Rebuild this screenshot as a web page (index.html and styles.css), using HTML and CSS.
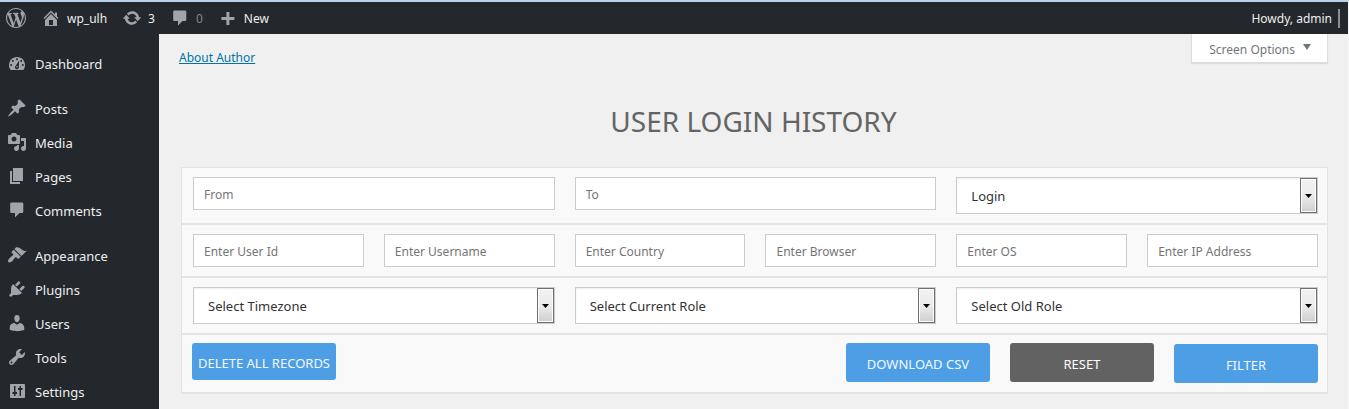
FILE: index.html
```html
<!DOCTYPE html>
<html lang="en">
<head>
<meta charset="utf-8">
<title>User Login History</title>
<link rel="stylesheet" href="styles.css">
</head>
<body>
<header class="adminbar">
  <a class="bar-item" href="#" aria-label="About WordPress"><svg class="icon" viewBox="0 0 20 20"><path d="M20 10c0-5.51-4.49-10-10-10C4.48 0 0 4.49 0 10c0 5.52 4.48 10 10 10 5.51 0 10-4.48 10-10zM7.78 15.37L4.37 6.22c.55-.02 1.17-.08 1.17-.08.5-.06.44-1.13-.06-1.11 0 0-1.45.11-2.37.11-.18 0-.37 0-.58-.01C4.12 2.69 6.87 1.11 10 1.11c2.33 0 4.45.87 6.05 2.34-.68-.11-1.65.39-1.65 1.58 0 .74.45 1.36.9 2.1.35.61.55 1.36.55 2.46 0 1.49-1.4 5-1.4 5l-3.03-8.37c.54-.02.82-.17.82-.17.5-.05.44-1.25-.06-1.22 0 0-1.44.12-2.38.12-.87 0-2.33-.12-2.33-.12-.5-.03-.56 1.2-.06 1.22l.92.08 1.26 3.41zM17.41 10c.24-.64.74-1.87.43-4.25.7 1.29 1.05 2.71 1.05 4.25 0 3.29-1.73 6.24-4.4 7.78.97-2.59 1.94-5.2 2.92-7.78zM6.1 18.09C3.12 16.65 1.11 13.53 1.11 10c0-1.3.23-2.48.72-3.59C3.25 10.3 4.67 14.2 6.1 18.09zm4.03-6.63l2.58 6.98c-.86.29-1.76.45-2.71.45-.79 0-1.57-.11-2.29-.33.81-2.38 1.62-4.74 2.42-7.1z"/></svg></a>
  <a class="bar-item" href="#"><svg class="icon" viewBox="0 0 20 20"><path fill-rule="evenodd" d="M16 8.5l1.53 1.53-1.06 1.06L10 4.6l-6.47 6.49-1.06-1.06L10 2.5l4 4v-2h2v4zm-6-2.46l6 5.99V18H4v-5.97zM12 17v-5H8v5h4z"/></svg>wp_ulh</a>
  <a class="bar-item" href="#"><svg class="icon" viewBox="0 0 20 20"><path d="M10.2 3.28c3.53 0 6.43 2.61 6.92 6h2.08l-3.5 4-3.5-4h2.32c-.45-1.97-2.21-3.45-4.32-3.45-1.45 0-2.73.71-3.54 1.78L4.95 5.66C6.23 4.2 8.11 3.28 10.2 3.28zm-.4 13.44c-3.52 0-6.43-2.61-6.92-6H.8l3.5-4 3.5 4H5.48c.45 1.97 2.21 3.45 4.32 3.45 1.45 0 2.73-.71 3.54-1.78l1.71 1.95c-1.28 1.46-3.15 2.38-5.25 2.38z"/></svg>3</a>
  <a class="bar-item bar-item-muted" href="#"><svg class="icon" viewBox="0 0 20 20"><path d="M4.500 2.500h10.500q1.300 0 1.300 1.300v8q0 1.200-1.300 1.200h-2.500L8 17.500V13H4.500q-1.300 0-1.300-1.200v-8q0-1.300 1.300-1.300z"/></svg>0</a>
  <a class="bar-item" href="#"><svg class="icon" viewBox="0 0 20 20"><path d="M8.400 4h3v5h5v3h-5v5h-3v-5h-5V9h5z"/></svg>New</a>
  <a class="bar-item bar-account" href="#">Howdy, admin<span class="avatar"></span></a>
</header>
<div class="layout">
  <nav class="sidebar" aria-label="Main menu">
    <div class="menu-group">
      <a class="menu-item" href="#"><svg class="icon" viewBox="0 0 20 20"><path d="M3.760 17h12.480c1.110-1.380 1.760-3.110 1.760-5 0-4.420-3.580-8-8-8s-8 3.580-8 8c0 1.890.65 3.620 1.760 5z"/><g class="icon-cut"><circle cx="10" cy="6.200" r="1"/><circle cx="5.800" cy="8" r="1"/><circle cx="14.200" cy="8" r="1"/><circle cx="4.200" cy="12" r="1"/><circle cx="15.800" cy="12" r="1"/><path d="M12.200 7.500l-.4 6a2 2 0 1 1-2.900-1z"/></g><circle cx="10" cy="13.800" r=".8"/></svg>Dashboard</a>
    </div>
    <div class="menu-group">
      <a class="menu-item" href="#"><svg class="icon" viewBox="0 0 20 20"><path d="M10.440 3.020l1.820-1.820 6.360 6.350-1.830 1.820c-1.050-.68-2.480-.57-3.410.36l-.75.75c-.92.93-1.040 2.350-.35 3.410l-1.830 1.820-2.410-2.410-2.800 2.790c-.42.42-3.380 2.710-3.800 2.290s1.860-3.390 2.280-3.810l2.790-2.790L4.100 9.360l1.830-1.820c1.050.69 2.480.57 3.400-.36l.75-.75c.93-.92 1.050-2.350.36-3.410z"/></svg>Posts</a>
      <a class="menu-item" href="#"><svg class="icon" viewBox="0 0 20 20"><path fill-rule="evenodd" d="M13 11V4c0-.55-.45-1-1-1h-1.670L9 1H5L3.670 3H2c-.55 0-1 .45-1 1v7c0 .55.45 1 1 1h10c.55 0 1-.45 1-1zM7 4.500c1.380 0 2.500 1.120 2.500 2.500S8.380 9.500 7 9.500 4.500 8.380 4.500 7 5.620 4.500 7 4.500zM14 6h5v10.500c0 1.380-1.120 2.500-2.500 2.500S14 17.880 14 16.500s1.120-2.500 2.500-2.500c.17 0 .34.02.5.05V9h-3V6zm-4 8.050V13h2v3.500c0 1.380-1.120 2.500-2.500 2.500S7 17.880 7 16.500 8.120 14 9.500 14c.17 0 .34.02.5.05z"/></svg>Media</a>
      <a class="menu-item" href="#"><svg class="icon" viewBox="0 0 20 20"><path d="M6 15V2h10v13H6zm-1 1h8v2H3V5h2v11z"/></svg>Pages</a>
      <a class="menu-item" href="#"><svg class="icon" viewBox="0 0 20 20"><path d="M4.500 2.500h10.500q1.300 0 1.300 1.300v8q0 1.200-1.300 1.200h-2.500L8 17.500V13H4.500q-1.300 0-1.300-1.200v-8q0-1.300 1.300-1.300z"/></svg>Comments</a>
    </div>
    <div class="menu-group">
      <a class="menu-item" href="#"><svg class="icon" viewBox="0 0 20 20"><path d="M14.480 11.060L7.410 3.990l1.500-1.500c.5-.56 2.300-.47 3.510.32 1.210.8 1.430 1.280 2.910 2.100 1.180.64 2.450 1.260 4.450.85zm-.71.71L6.700 4.700 4.930 6.470c-.39.39-.39 1.020 0 1.410l1.060 1.060c.39.39.39 1.030 0 1.420-.6.6-1.430 1.110-2.210 1.690-.35.26-.7.53-1.010.84C1.430 14.230.4 16.080 1.400 17.070c.99 1 2.840-.03 4.180-1.360.31-.31.58-.66.85-1.020.57-.78 1.080-1.610 1.690-2.210.39-.39 1.020-.39 1.410 0l1.060 1.060c.39.39 1.020.39 1.410 0z"/></svg>Appearance</a>
      <a class="menu-item" href="#"><svg class="icon" viewBox="0 0 20 20"><path d="M13.110 4.360L9.870 7.600 8 5.730l3.240-3.240c.35-.34 1.050-.2 1.560.32.52.51.66 1.210.31 1.550zm-8 1.770l.91-1.120 9.010 9.010-1.190.84c-.71.71-2.630 1.160-3.820 1.160H6.140L4.900 17.260c-.59.59-1.540.59-2.120 0-.59-.58-.59-1.530 0-2.120l1.240-1.240v-3.880c0-1.130.4-3.190 1.090-3.890zm7.260 3.970l3.240-3.240c.34-.35 1.040-.21 1.550.31.52.51.66 1.210.31 1.550l-3.240 3.250z"/></svg>Plugins</a>
      <a class="menu-item" href="#"><svg class="icon" viewBox="0 0 20 20"><path d="M10 9.250c-2.270 0-2.730-3.440-2.730-3.440C7 4.020 7.820 2 9.970 2c2.160 0 2.980 2.020 2.710 3.810 0 0-.41 3.440-2.680 3.440zm0 2.570L12.720 10c2.390 0 4.520 2.330 4.520 4.530v2.490s-3.650 1.130-7.240 1.130c-3.650 0-7.240-1.130-7.240-1.130v-2.490c0-2.250 1.940-4.480 4.470-4.480z"/></svg>Users</a>
      <a class="menu-item" href="#"><svg class="icon" viewBox="0 0 20 20"><path fill-rule="evenodd" d="M16.680 9.770c-1.340 1.340-3.300 1.670-4.950.99l-5.410 6.520c-.99.99-2.590.99-3.580 0s-.99-2.590 0-3.570l6.520-5.420c-.68-1.650-.35-3.610.99-4.950 1.280-1.280 3.120-1.620 4.720-1.060l-2.890 2.890 2.820 2.820 2.860-2.870c.53 1.580.18 3.390-1.080 4.650zM3.810 16.210c.4.39 1.040.39 1.430 0 .4-.4.4-1.040 0-1.430-.39-.4-1.030-.4-1.430 0-.39.39-.39 1.030 0 1.430z"/></svg>Tools</a>
      <a class="menu-item" href="#"><svg class="icon" viewBox="0 0 20 20"><path fill-rule="evenodd" d="M18 16V4c0-.6-.4-1-1-1H4c-.6 0-1 .4-1 1v12c0 .6.4 1 1 1h13c.6 0 1-.4 1-1zM8.500 11h1.500v2H8.500v2H7v-2H5.500v-2H7V5h1.500zM14 9v6h-1.500V9H11V7h1.500V5H14v2h1.500v2z"/></svg>Settings</a>
    </div>
  </nav>
  <main class="content">
    <div class="topline">
      <a class="about-link" href="#">About Author</a>
      <button class="screen-options" type="button">Screen Options<svg class="caret" viewBox="0 0 8 6"><path d="M0 0h8L4 6z"/></svg></button>
    </div>
    <h1 class="page-title">USER LOGIN HISTORY</h1>
    <form class="filters">
      <div class="filter-row cols-3">
        <input class="field" type="text" placeholder="From" aria-label="From">
        <input class="field" type="text" placeholder="To" aria-label="To">
        <div class="select-box"><select class="select" aria-label="Action type"><option>Login</option></select><span class="select-arrow"><svg class="arrow" viewBox="0 0 7 4"><path d="M0 0h7L3.500 4z"/></svg></span></div>
      </div>
      <div class="filter-row cols-6">
        <input class="field" type="text" placeholder="Enter User Id" aria-label="User Id">
        <input class="field" type="text" placeholder="Enter Username" aria-label="Username">
        <input class="field" type="text" placeholder="Enter Country" aria-label="Country">
        <input class="field" type="text" placeholder="Enter Browser" aria-label="Browser">
        <input class="field" type="text" placeholder="Enter OS" aria-label="OS">
        <input class="field" type="text" placeholder="Enter IP Address" aria-label="IP Address">
      </div>
      <div class="filter-row cols-3">
        <div class="select-box"><select class="select" aria-label="Timezone"><option>Select Timezone</option></select><span class="select-arrow"><svg class="arrow" viewBox="0 0 7 4"><path d="M0 0h7L3.500 4z"/></svg></span></div>
        <div class="select-box"><select class="select" aria-label="Current role"><option>Select Current Role</option></select><span class="select-arrow"><svg class="arrow" viewBox="0 0 7 4"><path d="M0 0h7L3.500 4z"/></svg></span></div>
        <div class="select-box"><select class="select" aria-label="Old role"><option>Select Old Role</option></select><span class="select-arrow"><svg class="arrow" viewBox="0 0 7 4"><path d="M0 0h7L3.500 4z"/></svg></span></div>
      </div>
      <div class="actions">
        <button class="btn btn-delete" type="button">DELETE ALL RECORDS</button>
        <div class="actions-end">
          <button class="btn" type="button">DOWNLOAD CSV</button>
          <button class="btn btn-reset" type="reset">RESET</button>
          <button class="btn btn-filter" type="submit">FILTER</button>
        </div>
      </div>
    </form>
  </main>
</div>
</body>
</html>
```
FILE: styles.css
```css
* { box-sizing: border-box; }

body {
  margin: 0;
  min-height: 100vh;
  display: flex;
  flex-direction: column;
  border-top: 2px solid #b9d1ea;
  border-right: 1px solid #f8f8f8;
  background: #f0f0f0;
  color: #333;
  font-family: "Noto Sans", "Open Sans", sans-serif;
  font-size: 13px;
}

button, input, select { font-family: inherit; }

.icon { flex: none; width: 20px; height: 20px; fill: #a0a5aa; }
.icon-cut { fill: #23282d; }

.adminbar {
  display: flex;
  align-items: center;
  gap: 15px;
  height: 32px;
  padding: 0 8px 0 6px;
  background: #23282d;
  font-size: 12px;
}
.bar-item {
  display: flex;
  align-items: center;
  gap: 6px;
  color: #eee;
  text-decoration: none;
}
.bar-item-muted { color: #82878c; }
.bar-account { margin-left: auto; }
.avatar { width: 2px; height: 19px; background: #8c8f94; }

.layout { flex: 1; display: flex; }

.sidebar {
  flex: none;
  display: flex;
  flex-direction: column;
  gap: 11px;
  width: 159px;
  padding-top: 13px;
  background: #23282d;
}
.menu-item {
  display: flex;
  align-items: center;
  gap: 8px;
  height: 34px;
  padding-left: 7px;
  color: #eee;
  text-decoration: none;
}
.menu-item .icon { margin-bottom: 2px; }

.content { flex: 1; min-width: 0; padding: 0 20px; }

.topline { display: flex; justify-content: space-between; }
.about-link { margin-top: 15px; color: #0073aa; font-size: 12px; line-height: 18px; }
.screen-options {
  display: flex;
  align-items: center;
  gap: 8px;
  height: 29px;
  padding: 2px 16px 0 17px;
  border: 1px solid #ddd;
  border-top: 0;
  background: #fff;
  box-shadow: 0 1px 1px rgba(0, 0, 0, 0.08);
  color: #72777c;
  font-size: 12px;
}
.caret { width: 8px; height: 6px; margin-bottom: 4px; fill: #72777c; }

.page-title {
  margin: 34px 0 26px;
  color: #646464;
  font-size: 28px;
  font-weight: 400;
  line-height: 40px;
  text-align: center;
}

.filters {
  margin-left: 2px;
  border: 1px solid #e3e3e3;
  border-bottom-width: 2px;
  background: #f9f9f9;
}
.filter-row {
  display: grid;
  align-items: start;
  gap: 20px;
  padding: 9px 9px 9px 11px;
  border-bottom: 2px solid #e3e3e3;
}
.cols-3 { grid-template-columns: repeat(3, minmax(0, 1fr)); }
.cols-6 { grid-template-columns: repeat(6, minmax(0, 1fr)); }

.field {
  width: 100%;
  height: 33px;
  padding: 2px 10px 0;
  border: 1px solid #ccc;
  background: #fff;
  color: #333;
  font-size: 12px;
}
.field::placeholder { color: #757575; opacity: 1; }

.select-box { position: relative; }
.select {
  display: block;
  width: 100%;
  height: 37px;
  padding: 0 24px 0 14px;
  border: 1px solid #ccc;
  border-radius: 0;
  appearance: none;
  background: #fff;
  box-shadow: inset 0 1px 2px rgba(0, 0, 0, 0.07);
  color: #333;
  font-size: 13px;
}
.select-arrow {
  position: absolute;
  top: 1px;
  right: 1px;
  bottom: 1px;
  display: flex;
  align-items: center;
  justify-content: center;
  width: 17px;
  border: 1px solid #707070;
  background: linear-gradient(#f2f2f2, #ebebeb 50%, #cfcfcf);
  box-shadow: inset 0 0 0 1px #fcfcfc;
  pointer-events: none;
}
.arrow { width: 7px; height: 4px; fill: #000; }

.actions {
  display: flex;
  justify-content: space-between;
  align-items: flex-start;
  padding: 8px 9px 9px 10px;
}
.actions-end { display: flex; gap: 20px; align-items: flex-start; }
.btn {
  width: 144px;
  height: 39px;
  padding: 2px 0 0;
  border: 0;
  border-radius: 3px;
  background: #4e9ee6;
  color: #f2f9ff;
  font-size: 13px;
  white-space: nowrap;
}
.btn-delete { height: 37px; }
.btn-reset { background: #626262; color: #fff; }
.btn-filter { margin-top: 1px; }
```
